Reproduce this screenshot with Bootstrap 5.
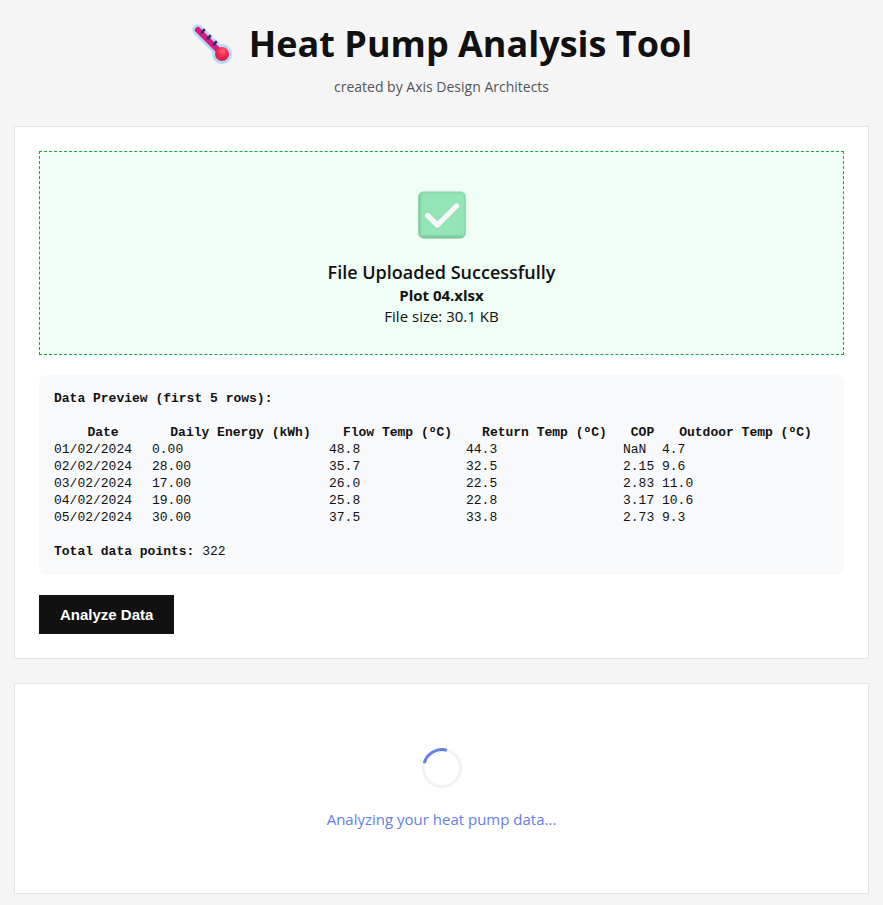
<!DOCTYPE html>
<html lang="en">
<head>
<meta charset="utf-8">
<meta name="viewport" content="width=device-width, initial-scale=1">
<title>Heat Pump Analysis Tool</title>
<link href="https://cdn.jsdelivr.net/npm/bootstrap@5.3.0/dist/css/bootstrap.min.css" rel="stylesheet">
<style>
body { background: #f5f5f5; color: #111; font-family: "Segoe UI", "Open Sans", "Noto Sans", sans-serif; font-size: 15px; line-height: 22px; }
.page { padding: 14px; }
.page-title { font-size: 36px; line-height: 60px; font-weight: 700; column-gap: 16px; }
.thermo { width: 42px; height: 42px; }
.subtitle { font-size: 14px; line-height: 26px; color: #555; margin-bottom: 26px; }
.panel { background: #fff; border: 1px solid #e5e5e5; padding: 24px; }
.drop-zone { background: #f0fdf4; border: 1px dashed #16a34a; padding: 39px 20px 27px; margin-bottom: 20px; }
.tick { width: 48px; height: 48px; margin-bottom: 20px; }
.drop-title { font-size: 18px; line-height: 26px; font-weight: 600; }
.drop-zone p { line-height: 21px; }
.preview { background: #f8f9fb; border-radius: 8px; padding: 15px; margin-bottom: 20px; font-family: "Liberation Mono", monospace; font-size: 13px; line-height: 17px; }
.preview table { table-layout: fixed; margin: 17px 0; }
.preview th { text-align: center; white-space: nowrap; }
.preview th, .preview td { padding: 0; }
.w-date { width: 98px; } .w-energy { width: 177px; } .w-flow { width: 137px; } .w-return { width: 157px; } .w-cop { width: 39px; }
.btn-run { background: #111; color: #fff; border: 1px solid #111; border-radius: 0; font: 700 15px/17px "Liberation Sans", Arial, sans-serif; padding: 10px 20px; }
.btn-run:hover { background: #333; color: #fff; }
.loading { margin-top: 24px; padding: 64px 24px 62px; color: #667eea; line-height: 23px; }
.ring { width: 40px; height: 40px; margin-bottom: 20px; }
</style>
<script src="https://cdn.jsdelivr.net/npm/bootstrap@5.3.0/dist/js/bootstrap.bundle.min.js"></script>
</head>
<body>
<main class="page">
  <header class="text-center">
    <h1 class="page-title d-flex justify-content-center align-items-center mb-0">
      <svg class="thermo" viewBox="0 0 42 42" aria-hidden="true">
        <defs>
          <linearGradient id="tube" x1="0" y1="1" x2="1" y2="0"><stop offset="0" stop-color="#d51b78"/><stop offset="1" stop-color="#d3379c"/></linearGradient>
          <radialGradient id="bulb" cx=".55" cy=".3" r=".75"><stop offset="0" stop-color="#ff687b"/><stop offset=".45" stop-color="#f5294e"/><stop offset="1" stop-color="#d51756"/></radialGradient>
        </defs>
        <g fill="#b5daf8" stroke="#b5daf8"><path d="M7 7 31 31" stroke-width="11" stroke-linecap="round"/><circle cx="31" cy="31" r="9.5"/></g>
        <path d="M7 7 29 29" stroke="#d51b84" stroke-width="6" stroke-linecap="round"/>
        <circle cx="31" cy="31" r="7" fill="url(#bulb)"/>
        <path d="m11 9.500 2-2.500M17 15.500l2-2.500M23 21.500l2-2.500" stroke="#3d2b58" stroke-width="2.800" stroke-linecap="round"/>
      </svg>
      <span>Heat Pump Analysis Tool</span>
    </h1>
    <p class="subtitle">created by Axis Design Architects</p>
  </header>

  <section class="panel">
    <div class="drop-zone text-center">
      <svg class="tick d-block mx-auto" viewBox="0 0 48 48" aria-hidden="true">
        <defs>
          <linearGradient id="tickSide"><stop offset="0" stop-color="#6fb996"/><stop offset=".1" stop-color="#94e5b6" stop-opacity="0"/><stop offset=".94" stop-color="#94e5b6" stop-opacity="0"/><stop offset="1" stop-color="#7bc99e"/></linearGradient>
          <linearGradient id="tickBase" x2="0" y2="1"><stop offset="0" stop-color="#84d4a8"/><stop offset=".07" stop-color="#94e5b6"/><stop offset=".9" stop-color="#94e5b6"/><stop offset="1" stop-color="#73bd98"/></linearGradient>
        </defs>
        <rect x=".5" y=".5" width="47" height="47" rx="5" fill="url(#tickBase)"/>
        <rect x=".5" y=".5" width="47" height="47" rx="5" fill="url(#tickSide)"/>
        <path d="m9.500 24.500 10 9.500 19-19" fill="none" stroke="#f7f6fc" stroke-width="5.200" stroke-linecap="round" stroke-linejoin="round"/>
      </svg>
      <h2 class="drop-title mb-0">File Uploaded Successfully</h2>
      <p class="mb-0"><strong>Plot 04.xlsx</strong></p>
      <p class="mb-0">File size: 30.1 KB</p>
    </div>

    <div class="preview">
      <strong class="d-block" id="preview-title">Data Preview (first 5 rows):</strong>
      <table class="w-100" aria-labelledby="preview-title">
        <colgroup><col class="w-date"><col class="w-energy"><col class="w-flow"><col class="w-return"><col class="w-cop"><col></colgroup>
        <thead><tr><th scope="col">Date</th><th scope="col">Daily Energy (kWh)</th><th scope="col">Flow Temp (ºC)</th><th scope="col">Return Temp (ºC)</th><th scope="col">COP</th><th scope="col">Outdoor Temp (ºC)</th></tr></thead>
        <tbody>
          <tr><td>01/02/2024</td><td>0.00</td><td>48.8</td><td>44.3</td><td>NaN</td><td>4.7</td></tr>
          <tr><td>02/02/2024</td><td>28.00</td><td>35.7</td><td>32.5</td><td>2.15</td><td>9.6</td></tr>
          <tr><td>03/02/2024</td><td>17.00</td><td>26.0</td><td>22.5</td><td>2.83</td><td>11.0</td></tr>
          <tr><td>04/02/2024</td><td>19.00</td><td>25.8</td><td>22.8</td><td>3.17</td><td>10.6</td></tr>
          <tr><td>05/02/2024</td><td>30.00</td><td>37.5</td><td>33.8</td><td>2.73</td><td>9.3</td></tr>
        </tbody>
      </table>
      <div><strong>Total data points:</strong> 322</div>
    </div>
    <button type="button" class="btn btn-run d-block">Analyze Data</button>
  </section>

  <section class="panel loading text-center" role="status">
    <svg class="ring d-block mx-auto" viewBox="0 0 40 40" fill="none" stroke-width="3" aria-hidden="true">
      <circle cx="20" cy="20" r="18.500" stroke="#f3f3f3"/>
      <path d="M2.200 15.200A18.500 18.500 0 0 1 24.800 2.200" stroke="#667eea"/>
    </svg>
    <p class="mb-0">Analyzing your heat pump data...</p>
  </section>
</main>
</body>
</html>
